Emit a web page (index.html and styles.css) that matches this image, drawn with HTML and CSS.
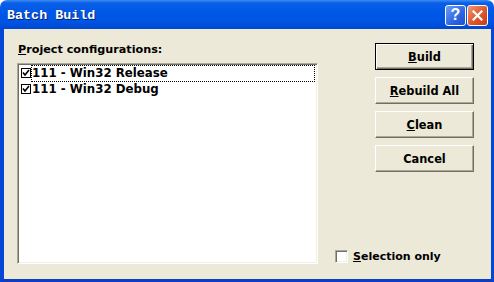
FILE: index.html
```html
<!DOCTYPE html>
<html>
  <head>
    <title>Batch Build</title>
    <link rel="stylesheet" href="styles.css">
  </head>
  <body>
    <div class="window">
      <div class="titlebar">
        <span class="title">Batch Build</span>
        <div class="caption-buttons">
          <span class="cap-btn help">?</span>
          <span class="cap-btn close">
            <svg width="11" height="11" viewBox="0 0 11 11">
              <path d="M1.5 1.5 L9.5 9.5 M9.5 1.5 L1.5 9.5" stroke="#fff" stroke-width="2.2" stroke-linecap="square"/>
            </svg>
          </span>
        </div>
      </div>

      <div class="client">
        <div class="left-col">
          <div class="label"><u>P</u>roject configurations:</div>
          <div class="listbox">
            <div class="item focused">
              <span class="mini-check">
                <svg width="8" height="8" viewBox="0 0 8 8"><path d="M1 3.5 L3 6 L7 1" stroke="#000" stroke-width="1.6" fill="none"/></svg>
              </span>
              <span class="item-text">111 - Win32 Release</span>
            </div>
            <div class="item">
              <span class="mini-check">
                <svg width="8" height="8" viewBox="0 0 8 8"><path d="M1 3.5 L3 6 L7 1" stroke="#000" stroke-width="1.6" fill="none"/></svg>
              </span>
              <span class="item-text">111 - Win32 Debug</span>
            </div>
          </div>
        </div>

        <div class="right-col">
          <div class="button-stack">
            <button class="btn default"><u>B</u>uild</button>
            <button class="btn"><u>R</u>ebuild All</button>
            <button class="btn"><u>C</u>lean</button>
            <button class="btn">Cancel</button>
          </div>
          <div class="selection">
            <span class="checkbox"></span>
            <span><u>S</u>election only</span>
          </div>
        </div>
      </div>
    </div>
  </body>
</html>
```

FILE: styles.css
```css
body{
  margin: 0;
  background-color: #ffffff;
}
.window{
  width: 494px;
  height: 282px;
  display: flex;
  flex-direction: column;
  font-family: "DejaVu Sans", Tahoma, sans-serif;
  font-weight: bold;
  font-size: 11px;
  color: #000000;
}
.titlebar{
  height: 29px;
  flex-shrink: 0;
  display: flex;
  align-items: center;
  justify-content: space-between;
  padding-left: 7px;
  padding-right: 6px;
  border-radius: 7px 7px 0 0;
  background: linear-gradient(#3d8df5 0px, #0a5fe6 3px, #0058e6 12px, #0054e3 22px, #0046cf 29px);
}
.title{
  font-family: "Liberation Mono", monospace;
  font-weight: bold;
  font-size: 13.4px;
  color: #ffffff;
  text-shadow: 1px 1px 0 #0a246a;
  padding-top: 1px;
}
.caption-buttons{
  display: flex;
  gap: 1px;
  margin-top: 1px;
}
.cap-btn{
  width: 19px;
  height: 19px;
  border: 1px solid #ffffff;
  border-radius: 3px;
  display: flex;
  align-items: center;
  justify-content: center;
  color: #ffffff;
  font-family: "Liberation Sans", Arial, sans-serif;
  font-size: 16px;
  font-weight: bold;
}
.help{
  background: linear-gradient(135deg, #6f9df5, #2d65e4 60%, #1c4fd0);
}
.close{
  background: linear-gradient(135deg, #f29774, #e0552c 55%, #c73d17);
}
.client{
  flex: 1;
  display: flex;
  gap: 17px;
  background-color: #ece9d8;
  border-left: 4px solid #0846d8;
  border-right: 3px solid #0846d8;
  border-bottom: 3px solid #0a3fc4;
  padding: 13px 17px 15px 13px;
}
.left-col{
  display: flex;
  flex-direction: column;
}
.label{
  height: 16px;
  line-height: 16px;
  padding-left: 1px;
  margin-bottom: 5px;
  font-size: 11.2px;
}
.listbox{
  width: 294px;
  height: 197px;
  background-color: #ffffff;
  border-top: 1px solid #aca899;
  border-left: 1px solid #aca899;
  border-right: 1px solid #ffffff;
  border-bottom: 1px solid #ffffff;
  box-shadow: inset 1px 1px 0 #716f64, inset -1px -1px 0 #f1efe2;
  padding: 1px 2px 1px 3px;
}
.item{
  display: flex;
  align-items: center;
  height: 16px;
  font-size: 11.8px;
}
.mini-check{
  width: 8px;
  height: 8px;
  border: 1px solid #000000;
  display: flex;
}
.item-text{
  flex: 1;
  height: 15px;
  line-height: 15px;
  border: 1px dotted transparent;
}
.focused .item-text{
  border-color: #000000;
}
.right-col{
  flex: 1;
  display: flex;
  flex-direction: column;
  justify-content: space-between;
}
.button-stack{
  display: flex;
  flex-direction: column;
  align-items: flex-end;
  gap: 7px;
  margin-top: 1px;
}
.btn{
  width: 99px;
  height: 27px;
  padding: 0;
  font-family: "DejaVu Sans", Tahoma, sans-serif;
  font-weight: bold;
  font-size: 11.4px;
  color: #000000;
  background-color: #ece9d8;
  border-top: 1px solid #ffffff;
  border-left: 1px solid #ffffff;
  border-right: 1px solid #716f64;
  border-bottom: 1px solid #716f64;
  box-shadow: inset -1px -1px 0 #aca899;
}
.btn.default{
  border: 1px solid #000000;
  box-shadow: inset 1px 1px 0 #ffffff, inset -1px -1px 0 #716f64, inset -2px -2px 0 #aca899;
}
.selection{
  display: flex;
  align-items: center;
  gap: 5px;
  height: 16px;
}
.checkbox{
  width: 11px;
  height: 11px;
  background-color: #ffffff;
  border-top: 1px solid #aca899;
  border-left: 1px solid #aca899;
  border-right: 1px solid #ffffff;
  border-bottom: 1px solid #ffffff;
  box-shadow: inset 1px 1px 0 #716f64, inset -1px -1px 0 #f1efe2;
}
```
